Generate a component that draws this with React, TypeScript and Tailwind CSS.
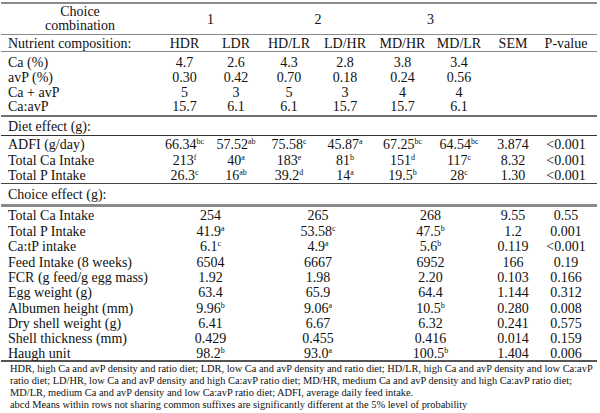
import React from "react";

type V = [string, string?];

const cols = ["HDR", "LDR", "HD/LR", "LD/HR", "MD/HR", "MD/LR", "SEM", "P-value"];

const comp: [string, string[]][] = [
  ["Ca (%)", ["4.7", "2.6", "4.3", "2.8", "3.8", "3.4"]],
  ["avP (%)", ["0.30", "0.42", "0.70", "0.18", "0.24", "0.56"]],
  ["Ca + avP", ["5", "3", "5", "3", "4", "4"]],
  ["Ca:avP", ["15.7", "6.1", "6.1", "15.7", "15.7", "6.1"]],
];

const diet: [string, V[]][] = [
  ["ADFI (g/day)", [["66.34", "bc"], ["57.52", "ab"], ["75.58", "c"], ["45.87", "a"], ["67.25", "bc"], ["64.54", "bc"], ["3.874"], ["<0.001"]]],
  ["Total Ca Intake", [["213", "f"], ["40", "a"], ["183", "e"], ["81", "b"], ["151", "d"], ["117", "c"], ["8.32"], ["<0.001"]]],
  ["Total P Intake", [["26.3", "c"], ["16", "ab"], ["39.2", "d"], ["14", "a"], ["19.5", "b"], ["28", "c"], ["1.30"], ["<0.001"]]],
];

const choice: [string, V[]][] = [
  ["Total Ca Intake", [["254"], ["265"], ["268"], ["9.55"], ["0.55"]]],
  ["Total P Intake", [["41.9", "a"], ["53.58", "c"], ["47.5", "b"], ["1.2"], ["0.001"]]],
  ["Ca:tP intake", [["6.1", "c"], ["4.9", "a"], ["5.6", "b"], ["0.119"], ["<0.001"]]],
  ["Feed Intake (8 weeks)", [["6504"], ["6667"], ["6952"], ["166"], ["0.19"]]],
  ["FCR (g feed/g egg mass)", [["1.92"], ["1.98"], ["2.20"], ["0.103"], ["0.166"]]],
  ["Egg weight (g)", [["63.4"], ["65.9"], ["64.4"], ["1.144"], ["0.312"]]],
  ["Albumen height (mm)", [["9.96", "b"], ["9.06", "a"], ["10.5", "b"], ["0.280"], ["0.008"]]],
  ["Dry shell weight (g)", [["6.41"], ["6.67"], ["6.32"], ["0.241"], ["0.575"]]],
  ["Shell thickness (mm)", [["0.429"], ["0.455"], ["0.416"], ["0.014"], ["0.159"]]],
  ["Haugh unit", [["98.2", "b"], ["93.0", "a"], ["100.5", "b"], ["1.404"], ["0.006"]]],
];

const notes = [
  "HDR, high Ca and avP density and ratio diet; LDR, low Ca and avP density and ratio diet; HD/LR, high Ca and avP density and low Ca:avP",
  "ratio diet; LD/HR, low Ca and avP density and high Ca:avP ratio diet; MD/HR, medium Ca and avP density and high Ca:avP ratio diet;",
  "MD/LR, medium Ca and avP density and low Ca:avP ratio diet; ADFI, average daily feed intake.",
  "abcd Means within rows not sharing common suffixes are significantly different at the 5% level of probability",
];

function Val({ v }: { v: V }) {
  return (
    <>
      {v[0]}
      {v[1] ? <sup className="text-[8px] -top-[5px]">{v[1]}</sup> : null}
    </>
  );
}

const lbl = "text-left pl-[7px] p-0 font-normal whitespace-nowrap";
const num = "text-center p-0 font-normal whitespace-nowrap";

export default function App() {
  return (
    <div
      className="w-[600px] h-[413px] bg-white text-[#111] overflow-hidden pt-[2px]"
      style={{ fontFamily: '"Liberation Serif", "Times New Roman", serif' }}
    >
      <table className="table-fixed border-separate border-spacing-0 w-[596px] ml-[1px] text-[14px] leading-[13px]">
        <colgroup>
          <col className="w-[158px]" />
          <col className="w-[51px]" />
          <col className="w-[52px]" />
          <col className="w-[54px]" />
          <col className="w-[58px]" />
          <col className="w-[57px]" />
          <col className="w-[56px]" />
          <col className="w-[52px]" />
          <col className="w-[58px]" />
        </colgroup>
        <thead>
          <tr className="h-[33px]">
            <th className={`${num} border-t-2 border-b border-[#8a8a8a] align-middle leading-[14px]`}>
              Choice
              <br />
              combination
            </th>
            <th colSpan={2} className={`${num} border-t-2 border-b border-[#8a8a8a]`}>1</th>
            <th colSpan={2} className={`${num} border-t-2 border-b border-[#8a8a8a]`}>2</th>
            <th colSpan={2} className={`${num} border-t-2 border-b border-[#8a8a8a]`}>3</th>
            <th className={`${num} border-t-2 border-b border-[#8a8a8a]`}></th>
            <th className={`${num} border-t-2 border-b border-[#8a8a8a]`}></th>
          </tr>
          <tr className="h-[17px]">
            <th className={`${lbl} border-b border-[#8a8a8a]`}>Nutrient composition:</th>
            {cols.map((c, i) => (
              <th key={c} className={`${num} border-b border-[#8a8a8a] ${i === 7 ? "pr-[4px]" : ""}`}>
                {c}
              </th>
            ))}
          </tr>
        </thead>
        <tbody>
          {comp.map(([l, vals], r) => {
            const first = r === 0;
            const last = r === comp.length - 1;
            const cls = `${first ? "pt-[3px]" : ""} ${last ? "pb-[2px] border-b-2 border-[#707070]" : ""}`;
            return (
              <tr key={l} className={first ? "h-[18px]" : last ? "h-[17px]" : "h-[15px]"}>
                <td className={`${lbl} ${cls}`}>{l}</td>
                {vals.map((v, i) => (
                  <td key={i} className={`${num} ${cls}`}>{v}</td>
                ))}
                <td className={`${num} ${cls}`}></td>
                <td className={`${num} ${cls}`}></td>
              </tr>
            );
          })}
          <tr className="h-[19px]">
            <td colSpan={9} className={`${lbl} border-b border-[#333]`}>Diet effect (g):</td>
          </tr>
          {diet.map(([l, vals], r) => {
            const last = r === diet.length - 1;
            const cls = last ? "border-b-[1.5px] border-[#444]" : "";
            return (
              <tr key={l} className="h-[16px]">
                <td className={`${lbl} ${cls}`}>{l}</td>
                {vals.map((v, i) => (
                  <td key={i} className={`${num} ${cls} ${i === 7 ? "pr-[4px]" : ""}`}>
                    <Val v={v} />
                  </td>
                ))}
              </tr>
            );
          })}
          <tr className="h-[23px]">
            <td colSpan={9} className={`${lbl} border-b-[3px] border-[#8a8a8a]`}>Choice effect (g):</td>
          </tr>
          {choice.map(([l, vals], r) => {
            const last = r === choice.length - 1;
            const cls = last ? "border-b-2 border-[#555]" : "";
            return (
              <tr key={l} className={r === 0 ? "h-[17px]" : last ? "h-[16px]" : "h-[15.3px]"}>
                <td className={`${lbl} ${cls}`}>{l}</td>
                {vals.map((v, i) => (
                  <td
                    key={i}
                    colSpan={i < 3 ? 2 : 1}
                    className={`${num} ${cls} ${i === 4 ? "pr-[4px]" : ""}`}
                  >
                    <Val v={v} />
                  </td>
                ))}
              </tr>
            );
          })}
        </tbody>
      </table>
      <div className="pl-[10px] text-[10.4px] leading-[11.8px] pt-[1px]">
        {notes.map((n) => (
          <div key={n} className="whitespace-nowrap">
            {n}
          </div>
        ))}
      </div>
    </div>
  );
}
